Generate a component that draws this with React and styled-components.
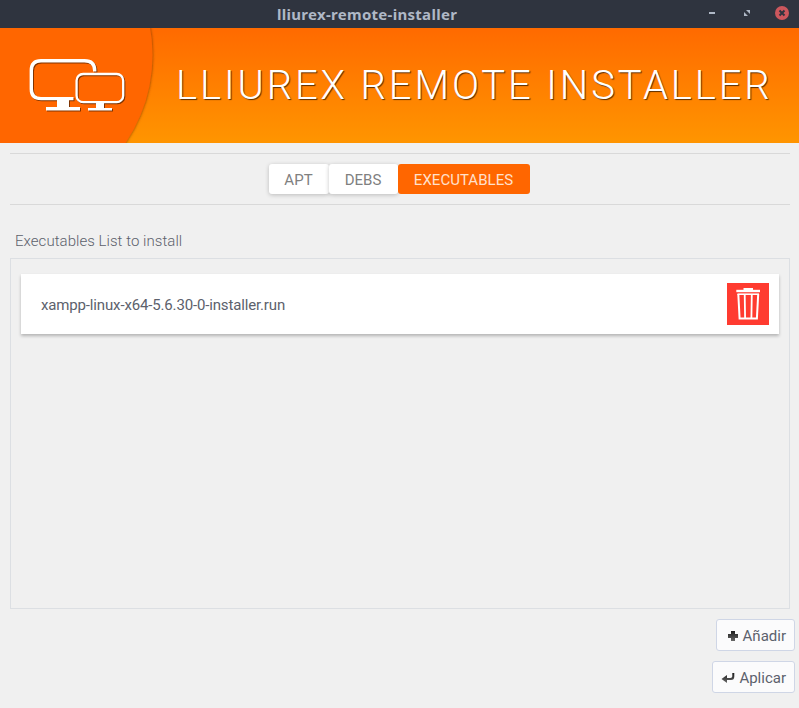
import React from "react";
import styled, { createGlobalStyle } from "styled-components";

const GlobalStyle = createGlobalStyle`
  * { box-sizing: border-box; }
  body { margin: 0; background: #f0f0f0; font-family: Roboto, sans-serif; overflow: hidden; }
`;

const Window = styled.div`
  width: 799px;
  height: 708px;
  display: flex;
  flex-direction: column;
  background: #f0f0f0;
`;

const TitleBar = styled.div`
  height: 28px;
  flex: none;
  display: grid;
  grid-template-columns: 1fr auto;
  align-items: center;
  background: #2f343f;
`;

const WindowTitle = styled.div`
  padding: 0 0 0 277px;
  font: bold 15px/20px "Noto Sans", sans-serif;
  letter-spacing: 0.29px;
  color: #afb8c6;
  white-space: nowrap;
`;

const WindowControls = styled.svg`
  display: block;
  width: 109px;
  height: 28px;
`;

const Banner = styled.header`
  height: 115px;
  flex: none;
  display: flex;
  background: linear-gradient(#ff6a00, #ff9500);
`;

const Logo = styled.svg`
  display: block;
  width: 160px;
  height: 115px;
  flex: none;
`;

const BannerTitle = styled.h1`
  margin: 0;
  padding-left: 16px;
  font-size: 40px;
  font-weight: 300;
  line-height: 115px;
  letter-spacing: 2.87px;
  color: #fff;
  text-shadow: 1px 1px 1px rgba(0, 0, 0, 0.65);
  white-space: nowrap;
`;

const TabStrip = styled.nav`
  height: 52px;
  flex: none;
  margin: 10px 9px 0 10px;
  padding: 10px 2px 0 0;
  display: flex;
  justify-content: center;
  border-top: 1px solid #d9d9d9;
  border-bottom: 1px solid #d9d9d9;
`;

const Tab = styled.button`
  width: ${(p) => p.$width}px;
  height: 30px;
  padding: 1px 0 0;
  border: 0;
  border-radius: 3px;
  font: 400 15px Roboto, sans-serif;
  letter-spacing: 0.03px;
  color: ${(p) => (p.$active ? "#ffe0cc" : "#808080")};
  background: ${(p) => (p.$active ? "#ff6600" : "#fff")};
  box-shadow: ${(p) => (p.$active ? "none" : "0 1px 4px rgba(0, 0, 0, 0.22)")};
`;

const ListLabel = styled.div`
  margin: 26px 0 0 15px;
  height: 27px;
  font-size: 15px;
  font-weight: 300;
  line-height: 20px;
  letter-spacing: 0.05px;
  color: #5c616c;
`;

const List = styled.div`
  height: 351px;
  flex: none;
  margin: 0 9px 0 10px;
  padding: 15px 10px;
  border: 1px solid #dcdfe3;
`;

const ListRow = styled.div`
  height: 60px;
  padding: 0 10px 0 20px;
  display: flex;
  align-items: center;
  justify-content: space-between;
  background: #fff;
  box-shadow: 0 2px 3px rgba(0, 0, 0, 0.25);
  font-size: 15px;
  color: #5c616c;
`;

const FileName = styled.span`
  padding-top: 2px;
  letter-spacing: -0.15px;
`;

const DeleteButton = styled.button`
  width: 42px;
  height: 42px;
  padding: 0;
  border: 0;
  background: #ff3b30;
`;

const Actions = styled.div`
  display: flex;
  flex-direction: column;
  align-items: flex-end;
  gap: 10px;
  padding: 10px 4px 0 0;
`;

const ActionButton = styled.button`
  width: ${(p) => p.$width}px;
  height: 32px;
  padding: 1px 8px 0 0;
  display: flex;
  align-items: center;
  justify-content: flex-end;
  gap: 4px;
  border: 1px solid #cfd6e6;
  border-radius: 3px;
  background: #fbfbfc;
  font: 400 15px Roboto, sans-serif;
  color: #5c616c;
`;

const Glyph = styled.svg`
  display: block;
  flex: none;
`;

function Monitors() {
  return (
    <>
      <path d="M94.7 43.5V42.5Q94.7 32.7 84.5 32.7H41Q31.3 32.7 31.3 42.5V61Q31.3 70.6 41 70.6H73.5" fill="none" stroke="currentColor" strokeWidth="3.4" />
      <path d="M57 71H69V79H80V82.5H46V79H57Z" fill="currentColor" />
      <rect x="76.6" y="46" width="46.6" height="28.2" rx="6.5" fill="none" stroke="currentColor" strokeWidth="2.3" />
      <path d="M96 75H104V80H112V82.5H88V80H96Z" fill="currentColor" />
    </>
  );
}

export default function App() {
  return (
    <>
      <GlobalStyle />
      <Window>
        <TitleBar>
          <WindowTitle>lliurex-remote-installer</WindowTitle>
          <WindowControls viewBox="0 0 109 28">
            <rect x="19" y="12" width="6" height="2" fill="#afb8c6" />
            <path d="M56 10H60V14ZM54 12V16H58Z" fill="#afb8c6" />
            <circle cx="92" cy="13" r="7" fill="#cc575d" />
            <path d="M89.5 10.5L94.5 15.5M94.5 10.5L89.5 15.5" stroke="#2f343f" strokeWidth="2" />
          </WindowControls>
        </TitleBar>
        <Banner>
          <Logo viewBox="0 0 160 115">
            <defs>
              <filter id="edge" x="-10%" y="-10%" width="120%" height="120%">
                <feDropShadow dx="0.5" dy="0" stdDeviation="1" floodColor="#6b3000" floodOpacity="0.65" />
              </filter>
              <filter id="depth" colorInterpolationFilters="sRGB">
                <feDropShadow dx="1" dy="1" stdDeviation="0.5" floodColor="#000" floodOpacity="0.5" />
              </filter>
            </defs>
            <circle cx="-4.5" cy="27" r="157" fill="#ff6600" filter="url(#edge)" />
            <g color="#fff" filter="url(#depth)">
              <Monitors />
            </g>
          </Logo>
          <BannerTitle>LLIUREX REMOTE INSTALLER</BannerTitle>
        </Banner>
        <TabStrip>
          <Tab $width={60}>APT</Tab>
          <Tab $width={69}>DEBS</Tab>
          <Tab $width={132} $active>EXECUTABLES</Tab>
        </TabStrip>
        <ListLabel>Executables List to install</ListLabel>
        <List>
          <ListRow>
            <FileName>xampp-linux-x64-5.6.30-0-installer.run</FileName>
            <DeleteButton aria-label="Delete">
              <Glyph width="42" height="42" viewBox="0 0 42 42" fill="none" stroke="#fff">
                <path d="M9.3 8H33" strokeWidth="2.4" />
                <path d="M16.5 6H26" strokeWidth="2" />
                <path d="M11.3 11L12.6 35.6H29.9L31.2 11" strokeWidth="2" />
                <path d="M10.5 11.2H32" strokeWidth="1.6" />
                <path d="M17.7 11L18.1 35M24.8 11L24.4 35" strokeWidth="1.8" />
              </Glyph>
            </DeleteButton>
          </ListRow>
        </List>
        <Actions>
          <ActionButton $width={79}>
            <Glyph width="12" height="12" viewBox="0 0 12 12">
              <defs>
                <linearGradient id="ink" x1="0" y1="0" x2="0" y2="1">
                  <stop offset="0" stopColor="#1c1c1c" />
                  <stop offset="1" stopColor="#686868" />
                </linearGradient>
              </defs>
              <path d="M4 1H8V4H11V8H8V11H4V8H1V4H4Z" fill="url(#ink)" />
            </Glyph>
            Añadir
          </ActionButton>
          <ActionButton $width={83}>
            <Glyph width="14" height="12" viewBox="0 0 14 12">
              <path d="M11.3 1H13.3V4.5Q13.3 8 10 8H6V11L0.5 7L6 3V6H9.5Q11.3 6 11.3 4.2Z" fill="url(#ink)" />
            </Glyph>
            Aplicar
          </ActionButton>
        </Actions>
      </Window>
    </>
  );
}
